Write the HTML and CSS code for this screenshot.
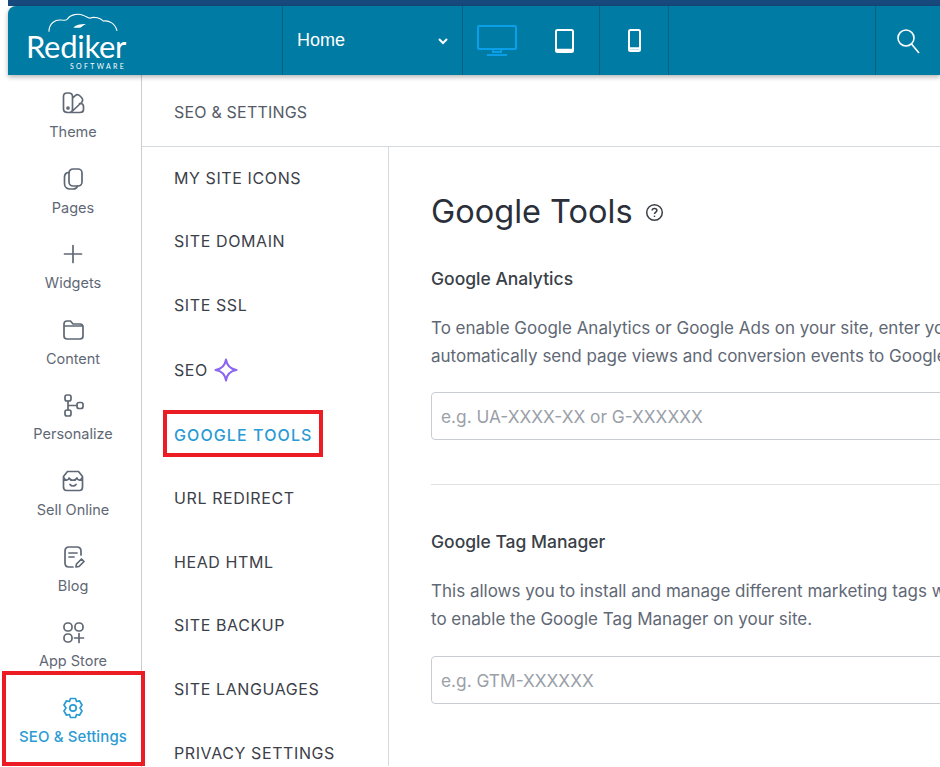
FILE: index.html
```html
<!DOCTYPE html>
<html lang="en">
<head>
    <meta charset="UTF-8">
    <title>Google Tools</title>
    <link rel="stylesheet" href="styles.css">
</head>
<body>
    <div class="strip"></div>
    <header class="topbar">
        <div class="logo">
            <svg class="cloud" width="70" height="20" viewBox="0 0 72 20" fill="none" stroke="#fff" stroke-width="1.1">
                <path d="M1 19C1 10 8 6 14 7C17 7 19 8 20 6C23 1 31 0 36 2C39 3 41 5 43 5C48 3 54 5 57 8C62 7 69 10 71 18"/>
                <path d="M26 15C28 12 33 11 39 11C36 12 35 14 33 15C31 15 29 15 26 15Z" fill="#fff" stroke="none"/>
            </svg>
            <div class="logo-name">Rediker</div>
            <div class="logo-sub">SOFTWARE</div>
        </div>
        <div class="page-select">
            <span>Home</span>
            <svg width="10" height="8" viewBox="0 0 10 8" fill="none" stroke="#fff" stroke-width="2"><path d="M1 2l4 4 4-4"/></svg>
        </div>
        <div class="devices">
            <svg class="desktop" width="40" height="31" viewBox="0 0 40 31" fill="none" stroke="#0a9fe8" stroke-width="2">
                <rect x="1" y="1" width="38" height="23" rx="1"/>
                <path d="M16 25v3M24 25v3" stroke-width="2"/>
                <path d="M10 30h20M15 27h10" stroke-width="2"/>
            </svg>
            <svg class="tablet" width="19" height="24" viewBox="0 0 19 24" fill="none" stroke="#fff" stroke-width="2">
                <rect x="1" y="1" width="17" height="22" rx="1.5"/>
                <path d="M1 21h17" stroke-width="2.500"/>
            </svg>
        </div>
        <div class="phone-cell">
            <svg width="13" height="23" viewBox="0 0 13 23" fill="none" stroke="#fff" stroke-width="2">
                <rect x="1" y="1" width="11" height="21" rx="1.5"/>
                <path d="M1 19.500h11" stroke-width="2.500"/>
            </svg>
        </div>
        <div class="spacer"></div>
        <div class="search-cell">
            <svg width="25" height="28" viewBox="0 0 25 28" fill="none" stroke="#fff" stroke-width="1.6">
                <circle cx="10" cy="11" r="8"/>
                <path d="M15.500 17L23 26"/>
            </svg>
        </div>
    </header>

    <div class="workspace">
        <nav class="sidebar">
            <a class="side-item">
                <svg class="side-icon" viewBox="0 0 24 24"><path d="M2.500 5.500C2.500 3.300 4 2 6 2H7.500C10 2 11.500 3.500 11.500 5.500V18C11.500 20 10 21.500 8 21.500H6.500C4 21.500 2.500 20 2.500 18ZM11.500 7L14 4.800C15.500 3.500 17.500 3.500 19 5L20.500 6.500C22 8 22 10 20.500 11.500L12 19.500M8 21.500H19C21 21.500 22.500 20.500 22.500 18.500V15.500C22.500 13.500 21.500 12.500 19.500 12.500H18.500"/><circle cx="7" cy="17" r="1"/></svg>
                <span>Theme</span>
            </a>
            <a class="side-item">
                <svg class="side-icon" viewBox="0 0 24 24"><rect x="8" y="2" width="13" height="17" rx="4"/><path d="M8 5.500C5 5.500 3.500 7.500 3.500 10V16.500C3.500 20 6 22 9 22H12C14.500 22 16 21 16.500 19"/></svg>
                <span>Pages</span>
            </a>
            <a class="side-item">
                <svg class="side-icon" viewBox="0 0 24 24"><path d="M12 3.500V20.500M3.500 12H20.500"/></svg>
                <span>Widgets</span>
            </a>
            <a class="side-item">
                <svg class="side-icon" viewBox="0 0 24 24"><path d="M3 6C3 4 4 3 6 3H9.500L12 6H19C21 6 22 7 22 9V18C22 20 21 21 19 21H6C4 21 3 20 3 18ZM3 8H22"/></svg>
                <span>Content</span>
            </a>
            <a class="side-item">
                <svg class="side-icon" viewBox="0 0 24 24"><rect x="4" y="2" width="6" height="6" rx="2"/><rect x="4" y="17" width="6" height="6" rx="2"/><rect x="16" y="9.500" width="6" height="6" rx="2"/><path d="M7 8V17M7 12.500H16"/></svg>
                <span>Personalize</span>
            </a>
            <a class="side-item">
                <svg class="side-icon" viewBox="0 0 24 24"><path d="M6.500 2.500H17.500L21.500 7.500V18C21.500 20 20.500 21.500 18.500 21.500H5.500C3.500 21.500 2.500 20 2.500 18V7.500ZM2.500 8C4 12 7 12 8 9C9.500 12 14.500 12 16 9C17 12 20 12 21.500 8M9 15.500C10.500 17.500 13.500 17.500 15 15.500"/></svg>
                <span>Sell Online</span>
            </a>
            <a class="side-item">
                <svg class="side-icon" viewBox="0 0 24 24"><path d="M20 10V6C20 3.500 18.500 2 16 2H8C5.500 2 4 3.500 4 6V18C4 20.500 5.500 22 8 22H12M8 8H16M8 12H13"/><path d="M15 22L15.500 19L20.500 14L23 16.500L18 21.500Z"/></svg>
                <span>Blog</span>
            </a>
            <a class="side-item">
                <svg class="side-icon" viewBox="0 0 24 24"><rect x="3" y="3" width="8" height="8" rx="3.500"/><rect x="14" y="3" width="8" height="8" rx="3.500"/><rect x="3" y="14" width="8" height="8" rx="3.500"/><path d="M18 13.500V22.500M13.500 18H22.500"/></svg>
                <span>App Store</span>
            </a>
            <a class="side-item active">
                <svg class="side-icon" viewBox="0 0 24 24"><path d="M9.500 2.500H14.500L15.500 5.500L18.500 4.800L21 9L19 12L21 15L18.500 19.200L15.500 18.500L14.500 21.500H9.500L8.500 18.500L5.500 19.200L3 15L5 12L3 9L5.500 4.800L8.500 5.500Z" stroke-linejoin="round"/><circle cx="12" cy="12" r="3.200"/></svg>
                <span>SEO &amp; Settings</span>
            </a>
        </nav>

        <div class="panel">
            <div class="panel-title">SEO &amp; SETTINGS</div>
            <div class="panel-body">
                <ul class="menu">
                    <li>MY SITE ICONS</li>
                    <li>SITE DOMAIN</li>
                    <li>SITE SSL</li>
                    <li class="seo">SEO
                        <svg width="24" height="24" viewBox="0 0 24 24" fill="none" stroke="#8b66f0" stroke-width="2" stroke-linejoin="round"><path d="M12 1.500C13 8 16 11 22.500 12C16 13 13 16 12 22.500C11 16 8 13 1.500 12C8 11 11 8 12 1.500Z"/></svg>
                    </li>
                    <li class="current">GOOGLE TOOLS</li>
                    <li>URL REDIRECT</li>
                    <li>HEAD HTML</li>
                    <li>SITE BACKUP</li>
                    <li>SITE LANGUAGES</li>
                    <li>PRIVACY SETTINGS</li>
                </ul>
                <main class="content">
                    <h1>Google Tools
                        <svg width="19" height="19" viewBox="0 0 20 20" fill="none" stroke="#3b4048" stroke-width="1.600"><circle cx="10" cy="10" r="8.200"/><path d="M7.500 8C7.500 6.500 8.600 5.700 10 5.700S12.500 6.600 12.500 7.900C12.500 9.600 10 9.700 10 11.600"/><path d="M10 13.300v1.400"/></svg>
                    </h1>
                    <section class="tool">
                        <h2>Google Analytics</h2>
                        <p>To enable Google Analytics or Google Ads on your site, enter your tracking ID. We will<br>automatically send page views and conversion events to Google Analytics for you.</p>
                        <input class="field" type="text" placeholder="e.g. UA-XXXX-XX or G-XXXXXX">
                    </section>
                    <section class="tool second">
                        <h2>Google Tag Manager</h2>
                        <p>This allows you to install and manage different marketing tags without editing code. Enter an ID<br>to enable the Google Tag Manager on your site.</p>
                        <input class="field" type="text" placeholder="e.g. GTM-XXXXXX">
                    </section>
                </main>
            </div>
        </div>
    </div>

    <div class="callout callout-side"></div>
    <div class="callout callout-menu"></div>
</body>
</html>
```

FILE: styles.css
```css
html, body {
    margin: 0;
    height: 767px;
    overflow: hidden;
}

body {
    position: relative;
    width: 940px;
    background: #fff;
    font-family: Inter, "Noto Sans", sans-serif;
    color: #5f6875;
}

.strip {
    height: 6px;
    margin-left: 8px;
    background: #17497c;
}

.topbar {
    display: flex;
    height: 69px;
    margin-left: 8px;
    background: #007ba3;
    border-top-left-radius: 8px;
    box-shadow: 0 2px 5px rgba(0, 0, 0, 0.3);
    position: relative;
    z-index: 2;
    color: #fff;
}

.logo {
    width: 275px;
    padding-left: 18px;
    box-sizing: border-box;
    display: flex;
    flex-direction: column;
    border-right: 1px solid #04617f;
    flex-shrink: 0;
}

.cloud {
    margin: 7px 0 0 22px;
    flex-shrink: 0;
}

.logo-name {
    font-family: Lato, sans-serif;
    font-size: 31px;
    line-height: 28px;
    margin: -1px 0 0 0;
    letter-spacing: -0.3px;
}

.logo-sub {
    font-family: Lato, sans-serif;
    font-size: 7px;
    letter-spacing: 2.3px;
    line-height: 8px;
    margin: 2px 0 0 44px;
}

.page-select {
    width: 180px;
    flex-shrink: 0;
    box-sizing: border-box;
    padding: 0 14px 0 14px;
    display: flex;
    align-items: center;
    justify-content: space-between;
    border-right: 1px solid #04617f;
    font-family: "Liberation Sans", sans-serif;
    font-size: 18px;
}

.devices {
    width: 137px;
    flex-shrink: 0;
    box-sizing: border-box;
    display: flex;
    align-items: center;
    padding-left: 14px;
    gap: 38px;
    border-right: 1px solid #04617f;
}

.phone-cell {
    width: 69px;
    flex-shrink: 0;
    box-sizing: border-box;
    display: flex;
    align-items: center;
    justify-content: center;
    border-right: 1px solid #04617f;
}

.spacer {
    width: 206px;
    flex-shrink: 0;
    border-right: 1px solid #04617f;
}

.search-cell {
    display: flex;
    align-items: center;
    padding-left: 20px;
}

.workspace {
    display: flex;
    height: 692px;
}

.sidebar {
    width: 134px;
    margin-left: 8px;
    border-right: 1px solid #c9cdd2;
    flex-shrink: 0;
    display: flex;
    flex-direction: column;
    padding: 16px 3px 0 0;
    box-sizing: border-box;
}

.side-item {
    height: 75.6px;
    flex-shrink: 0;
    display: flex;
    flex-direction: column;
    align-items: center;
    font-size: 14.5px;
    line-height: 18px;
    gap: 8px;
    white-space: nowrap;
}

.side-icon {
    width: 24px;
    height: 24px;
    fill: none;
    stroke: #5f6875;
    stroke-width: 1.7;
    stroke-linecap: round;
    stroke-linejoin: round;
}

.side-item.active {
    color: #2a9bd3;
    font-size: 15px;
    font-weight: 500;
    letter-spacing: 0.1px;
}

.side-item.active .side-icon {
    stroke: #2a9bd3;
}

.panel {
    flex: 1;
    min-width: 0;
}

.panel-title {
    height: 72px;
    box-sizing: border-box;
    padding-left: 32px;
    line-height: 74px;
    font-size: 16px;
    letter-spacing: 0.2px;
    border-bottom: 1px solid #d3dae0;
    color: #555b66;
}

.panel-body {
    display: flex;
    height: 619px;
}

.menu {
    list-style: none;
    margin: -1px 0 0;
    padding: 0 0 0 32px;
    width: 247px;
    box-sizing: border-box;
    border-right: 1px solid #d3dae0;
    flex-shrink: 0;
    color: #3c4049;
    font-size: 16px;
    letter-spacing: 0.6px;
}

.menu li {
    height: 63.6px;
    display: flex;
    align-items: center;
    gap: 6px;
    white-space: nowrap;
}

.menu li.seo {
    height: 66px;
}

.menu li.current {
    color: #2a9bd3;
    font-weight: 500;
    letter-spacing: 1.1px;
}

.content {
    padding: 43px 0 0 42px;
    flex: 1;
    min-width: 0;
    white-space: nowrap;
}

h1 {
    margin: 0;
    font-size: 32.5px;
    line-height: 44px;
    font-weight: 400;
    color: #2a2f3a;
    display: flex;
    align-items: center;
    gap: 12px;
}

.tool {
    margin-top: 33px;
}

.tool.second {
    margin-top: 44px;
    border-top: 1px solid #dfe3e6;
    padding-top: 45px;
}

.tool.second p {
    margin-bottom: 23px;
}

h2 {
    margin: 0 0 23px;
    font-size: 17.5px;
    line-height: 24px;
    font-weight: 500;
    color: #3a3f48;
}

.tool p {
    margin: 0 0 22px;
    font-size: 17px;
    line-height: 28px;
    color: #5f6875;
}

.field {
    display: block;
    width: 600px;
    height: 48px;
    box-sizing: border-box;
    padding: 0 9px;
    border: 1px solid #c9cdd2;
    border-radius: 4px;
    font-family: inherit;
    font-size: 17.3px;
    background: #fff;
}

.field::placeholder {
    color: #9aa0a8;
}

.callout {
    position: absolute;
    box-sizing: border-box;
    border: 4px solid #ec1c24;
    z-index: 3;
}

.callout-side {
    left: 2px;
    top: 671px;
    width: 143px;
    height: 95px;
}

.callout-menu {
    left: 163px;
    top: 410px;
    width: 160px;
    height: 47px;
}
```
